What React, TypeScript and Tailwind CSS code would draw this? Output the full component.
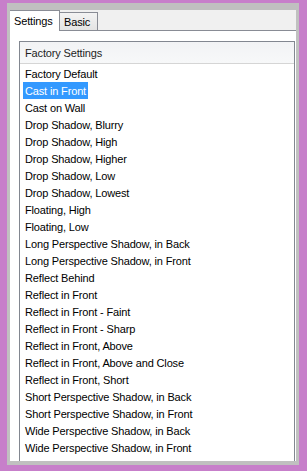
const items = [
  "Factory Default",
  "Cast in Front",
  "Cast on Wall",
  "Drop Shadow, Blurry",
  "Drop Shadow, High",
  "Drop Shadow, Higher",
  "Drop Shadow, Low",
  "Drop Shadow, Lowest",
  "Floating, High",
  "Floating, Low",
  "Long Perspective Shadow, in Back",
  "Long Perspective Shadow, in Front",
  "Reflect Behind",
  "Reflect in Front",
  "Reflect in Front - Faint",
  "Reflect in Front - Sharp",
  "Reflect in Front, Above",
  "Reflect in Front, Above and Close",
  "Reflect in Front, Short",
  "Short Perspective Shadow, in Back",
  "Short Perspective Shadow, in Front",
  "Wide Perspective Shadow, in Back",
  "Wide Perspective Shadow, in Front",
];

const font = { fontFamily: '"Liberation Sans", Arial, sans-serif' };

export default function App() {
  const selected = 1;
  return (
    <div
      style={font}
      className="w-[307px] h-[471px] bg-[#c77fca] pt-[3px] pl-[7px] pr-[8px] pb-[6px] text-[11px] tracking-[-0.15px] text-black"
    >
      <div className="h-full bg-[#c0c0c0] pt-[7px] pl-[3px] pr-[3px] pb-[4px]">
        <div className="h-full flex flex-col bg-white">
          {/* tab strip */}
          <div className="h-[21px] flex items-end bg-[#f0f0f0] border-b border-[#898c95]">
            <div className="relative z-10 -mb-px h-[21px] w-[50px] pl-[4px] pt-[3px] bg-white border-t border-r border-[#898c95] leading-[14px]">
              Settings
            </div>
            <div className="h-[18px] w-[38px] pl-[4px] pt-[2px] border-t border-r border-[#898c95] bg-gradient-to-b from-[#f3f3f3] to-[#e4e4e4] leading-[14px]">
              Basic
            </div>
          </div>

          {/* panel */}
          <div className="flex-1 overflow-hidden pt-[10px] pl-[9px] pr-px flex flex-col">
            <div className="flex-1 border-t border-l border-r border-[#828790] flex flex-col">
              <div className="h-[22px] border-b border-[#d5d5d5] bg-gradient-to-b from-[#f2f3f5] to-[#f7f8f9] pl-[5px] pt-px leading-[20px] text-[#1e1e1e]">
                Factory Settings
              </div>
              <ul className="pt-px pl-[3px]">
                {items.map((item, i) => (
                  <li key={item} className="flex h-[17px]">
                    <span
                      className={
                        i === selected
                          ? "block h-[17px] px-[2px] pt-[2px] leading-[15px] bg-[#3399ff] text-white"
                          : "block h-[17px] px-[2px] pt-[2px] leading-[15px]"
                      }
                    >
                      {item}
                    </span>
                  </li>
                ))}
              </ul>
            </div>
          </div>
        </div>
      </div>
    </div>
  );
}
